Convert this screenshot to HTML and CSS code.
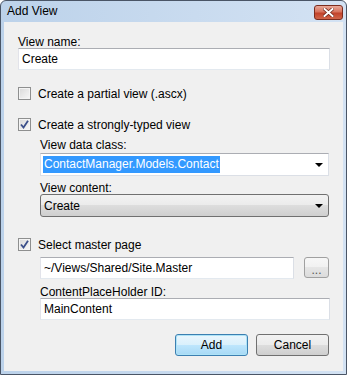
FILE: index.html
```html
<!DOCTYPE html>
<html lang="en">
<head>
  <meta charset="UTF-8" />
  <title>Add View</title>
  <link rel="stylesheet" href="styles.css">
</head>
<body>
  <div class="window">
    <div class="titlebar">
      <span class="title">Add View</span>
      <div class="close">
        <svg width="11" height="9" viewBox="0 0 11 9">
          <path d="M1.5 1 L9.5 8 M9.5 1 L1.5 8" stroke="#6b2418" stroke-width="3.4" stroke-linecap="square"/>
          <path d="M1.5 1 L9.5 8 M9.5 1 L1.5 8" stroke="#fff" stroke-width="2" stroke-linecap="square"/>
        </svg>
      </div>
    </div>

    <div class="content">
      <div class="field-label">View name:</div>
      <div class="textbox">Create</div>

      <div class="check-row">
        <span class="checkbox"></span>
        <span>Create a partial view (.ascx)</span>
      </div>

      <div class="check-row">
        <span class="checkbox checked">
          <svg width="9" height="9" viewBox="0 0 9 9"><path d="M1 4.5 L3.5 7.5 L8 0.8" fill="none" stroke="#3b4f8a" stroke-width="1.8"/></svg>
        </span>
        <span>Create a strongly-typed view</span>
      </div>

      <div class="indent">
        <div class="field-label first">View data class:</div>
        <div class="combo editable">
          <span class="selected">ContactManager.Models.Contact</span>
          <span class="arrow"></span>
        </div>

        <div class="field-label">View content:</div>
        <div class="combo dropdown">
          <span>Create</span>
          <span class="arrow"></span>
        </div>
      </div>

      <div class="check-row master">
        <span class="checkbox checked">
          <svg width="9" height="9" viewBox="0 0 9 9"><path d="M1 4.5 L3.5 7.5 L8 0.8" fill="none" stroke="#3b4f8a" stroke-width="1.8"/></svg>
        </span>
        <span>Select master page</span>
      </div>

      <div class="indent">
        <div class="browse-row">
          <div class="textbox">~/Views/Shared/Site.Master</div>
          <div class="btn browse">...</div>
        </div>
        <div class="field-label first">ContentPlaceHolder ID:</div>
        <div class="textbox">MainContent</div>
      </div>

      <div class="buttons">
        <div class="btn default">Add</div>
        <div class="btn">Cancel</div>
      </div>
    </div>
  </div>
</body>
</html>
```

FILE: styles.css
```css
body {
  margin: 0;
  background: #fff;
  font-family: "Liberation Sans", Arial, sans-serif;
  font-size: 12px;
  color: #000;
}

.window {
  box-sizing: border-box;
  width: 347px;
  height: 375px;
  border: 1px solid #4a5566;
  border-radius: 6px 6px 0 0;
  padding: 0 3px 3px 3px;
  background: linear-gradient(to right, #bcd2ea, #d3e2f3);
  display: flex;
  flex-direction: column;
}

.titlebar {
  height: 21px;
  display: flex;
  align-items: center;
  justify-content: space-between;
}

.title {
  margin-left: 3px;
  margin-top: -1px;
  font-size: 12px;
}

.close {
  box-sizing: border-box;
  width: 29px;
  height: 15px;
  margin-top: 2px;
  border: 1px solid #7b2c1e;
  border-radius: 3px;
  background: linear-gradient(#e9a99a, #d7735d 45%, #c2432b 55%, #d0654a);
  display: flex;
  align-items: center;
  justify-content: center;
}

.content {
  flex: 1;
  background: #f0f0f0;
  padding: 13px 13px 0 14px;
}

.field-label {
  height: 13px;
  line-height: 14px;
  margin-top: 5px;
}

.content > .field-label {
  margin-top: 0;
}

.field-label.first {
  margin-top: 6px;
}

.textbox {
  box-sizing: border-box;
  height: 22px;
  line-height: 20px;
  padding-left: 3px;
  background: #fff;
  border: 1px solid #e2e3ea;
  border-top-color: #abadb3;
  border-bottom-color: #e3e9ef;
  border-right-color: #dbdfe6;
  white-space: nowrap;
}

.check-row {
  height: 15px;
  margin-top: 16px;
  display: flex;
  align-items: center;
  gap: 7px;
}

.check-row.master {
  margin-top: 20px;
}

.checkbox {
  box-sizing: border-box;
  width: 13px;
  height: 13px;
  border: 1px solid #8e8f8f;
  background: linear-gradient(135deg, #d9d9d9, #f8f8f8);
  box-shadow: inset 0 0 0 1px #f4f4f4;
  display: flex;
  align-items: center;
  justify-content: center;
}

.indent {
  margin-left: 22px;
}

.combo {
  box-sizing: border-box;
  height: 23px;
  margin-top: 2px;
  margin-right: 1px;
  display: flex;
  align-items: center;
  justify-content: space-between;
  padding-right: 5px;
}

.combo.editable {
  background: #fff;
  border: 1px solid #dbdfe6;
  border-top-color: #abadb3;
  padding-left: 2px;
}

.selected {
  background: #3399ff;
  color: #fff;
  line-height: 17px;
  padding: 0 1px;
}

.combo.dropdown {
  margin-top: 0;
  border: 1px solid #707070;
  border-radius: 3px;
  background: linear-gradient(#f2f2f2, #ebebeb 50%, #dddddd 50%, #cfcfcf);
  padding-left: 3px;
}

.arrow {
  width: 0;
  height: 0;
  border-left: 4px solid transparent;
  border-right: 4px solid transparent;
  border-top: 4px solid #000;
}

.browse-row {
  margin-top: 5px;
  display: flex;
  align-items: flex-start;
  gap: 10px;
}

.browse-row .textbox {
  width: 254px;
}

.btn {
  box-sizing: border-box;
  height: 22px;
  width: 73px;
  border: 1px solid #707070;
  border-radius: 3px;
  background: linear-gradient(#f2f2f2, #ebebeb 50%, #dddddd 50%, #cfcfcf);
  display: flex;
  align-items: center;
  justify-content: center;
}

.btn.browse {
  width: 25px;
  height: 21px;
  border-color: #a0a0a0;
  background: linear-gradient(#f7f7f7, #f1f1f1 50%, #e6e6e6 50%, #dcdcdc);
  color: #555;
  line-height: 10px;
  padding-top: 4px;
}

.btn.default {
  border-color: #3c7fb1;
  box-shadow: inset 0 0 0 1px #aee3f7;
  background: linear-gradient(#eaf6fd, #d9f0fc 50%, #bee6fd 50%, #a7d9f5);
}

.buttons {
  margin-top: 14px;
  margin-right: 1px;
  display: flex;
  justify-content: flex-end;
  gap: 8px;
}
```
